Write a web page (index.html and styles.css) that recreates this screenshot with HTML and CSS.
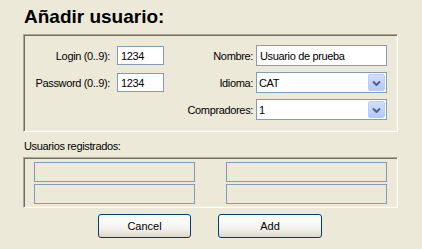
FILE: index.html
```html
<!DOCTYPE html>
<html lang="es">
<head>
    <meta charset="UTF-8">
    <title>Añadir usuario</title>
    <link rel="stylesheet" href="styles.css">
</head>
<body>
    <h1>Añadir usuario:</h1>

    <!-- datos del usuario -->
    <div class="panel user-panel">
        <label class="field-label" for="login">Login (0..9):</label>
        <input class="text-input short" id="login" type="text" value="1234">
        <label class="field-label right" for="nombre">Nombre:</label>
        <input class="text-input" id="nombre" type="text" value="Usuario de prueba">

        <label class="field-label" for="password">Password (0..9):</label>
        <input class="text-input short" id="password" type="text" value="1234">
        <label class="field-label right" for="idioma">Idioma:</label>
        <div class="select-box">
            <select id="idioma"><option>CAT</option></select>
            <span class="select-btn"><svg width="9" height="6" viewBox="0 0 9 6"><path d="M1 1.5 L4.5 5 L8 1.5" fill="none" stroke="#4d6185" stroke-width="2"/></svg></span>
        </div>

        <span></span>
        <span></span>
        <label class="field-label right" for="compradores">Compradores:</label>
        <div class="select-box">
            <select id="compradores"><option>1</option></select>
            <span class="select-btn"><svg width="9" height="6" viewBox="0 0 9 6"><path d="M1 1.5 L4.5 5 L8 1.5" fill="none" stroke="#4d6185" stroke-width="2"/></svg></span>
        </div>
    </div>

    <!-- lista de usuarios -->
    <p class="list-title">Usuarios registrados:</p>
    <div class="panel list-panel">
        <div class="list-slot"></div>
        <div class="list-slot"></div>
        <div class="list-slot"></div>
        <div class="list-slot"></div>
    </div>

    <div class="buttons">
        <button class="btn cancel" type="button">Cancel</button>
        <button class="btn add" type="button">Add</button>
    </div>
</body>
</html>
```

FILE: styles.css
```css
/* styles.css */
body {
    margin: 0;
    background-color: #ece9d8;
    font-family: "Liberation Sans", Arial, sans-serif;
    font-size: 11px;
    letter-spacing: -0.35px;
    color: #000;
}

h1 {
    margin: 6px 0 0 24px;
    font-size: 19px;
    line-height: 22px;
    font-weight: bold;
    letter-spacing: 0;
}

.panel {
    box-sizing: border-box;
    width: 375px;
    margin-left: 23px;
    border-top: 1px solid #aca899;
    border-left: 1px solid #aca899;
    border-right: 1px solid #fff;
    border-bottom: 1px solid #fff;
    box-shadow: inset 1px 1px 0 #716f64, inset -1px -1px 0 #f1efe2;
}

.user-panel {
    margin-top: 6px;
    height: 98px;
    padding: 10px 0 0 1px;
    display: grid;
    grid-template-columns: 92px 47px 92px 131px;
    grid-auto-rows: 21px;
    row-gap: 6px;
    align-items: center;
}

.field-label {
    text-align: right;
    padding-right: 7px;
}

.field-label.right {
    padding-right: 3px;
}

.text-input {
    box-sizing: border-box;
    width: 131px;
    height: 21px;
    margin: 0;
    padding: 0 3px;
    border: 1px solid #7f9db9;
    background: #fff;
    font: inherit;
    letter-spacing: inherit;
    outline: none;
}

.text-input.short {
    width: 47px;
    height: 19px;
}

.select-box {
    position: relative;
    height: 21px;
}

.select-box select {
    box-sizing: border-box;
    width: 131px;
    height: 21px;
    margin: 0;
    padding: 0 2px;
    border: 1px solid #7f9db9;
    border-radius: 0;
    background: #fff;
    font: inherit;
    letter-spacing: inherit;
    appearance: none;
    -webkit-appearance: none;
    outline: none;
}

.select-btn {
    position: absolute;
    top: 2px;
    right: 2px;
    width: 15px;
    height: 15px;
    border: 1px solid #b9cdf6;
    border-radius: 2px;
    background: linear-gradient(#d1dffd, #b4c9f6);
    display: flex;
    align-items: center;
    justify-content: center;
}

.list-title {
    margin: 8px 0 0 24px;
    line-height: 13px;
}

.list-panel {
    margin-top: 4px;
    height: 51px;
    padding: 4px 0 2px 10px;
    display: grid;
    grid-template-columns: 161px 161px;
    grid-auto-rows: 20px;
    column-gap: 31px;
    row-gap: 2px;
}

.list-slot {
    border: 1px solid #7f9db9;
}

.buttons {
    display: flex;
    gap: 27px;
    margin: 6px 0 0 98px;
}

.btn {
    height: 24px;
    border: 1px solid #003c74;
    border-radius: 3px;
    background: linear-gradient(#ffffff, #f4f3ee 60%, #dcd8cb);
    font: inherit;
    letter-spacing: 0;
    color: #000;
    padding: 0;
}

.btn.cancel {
    width: 93px;
}

.btn.add {
    width: 104px;
}
```
